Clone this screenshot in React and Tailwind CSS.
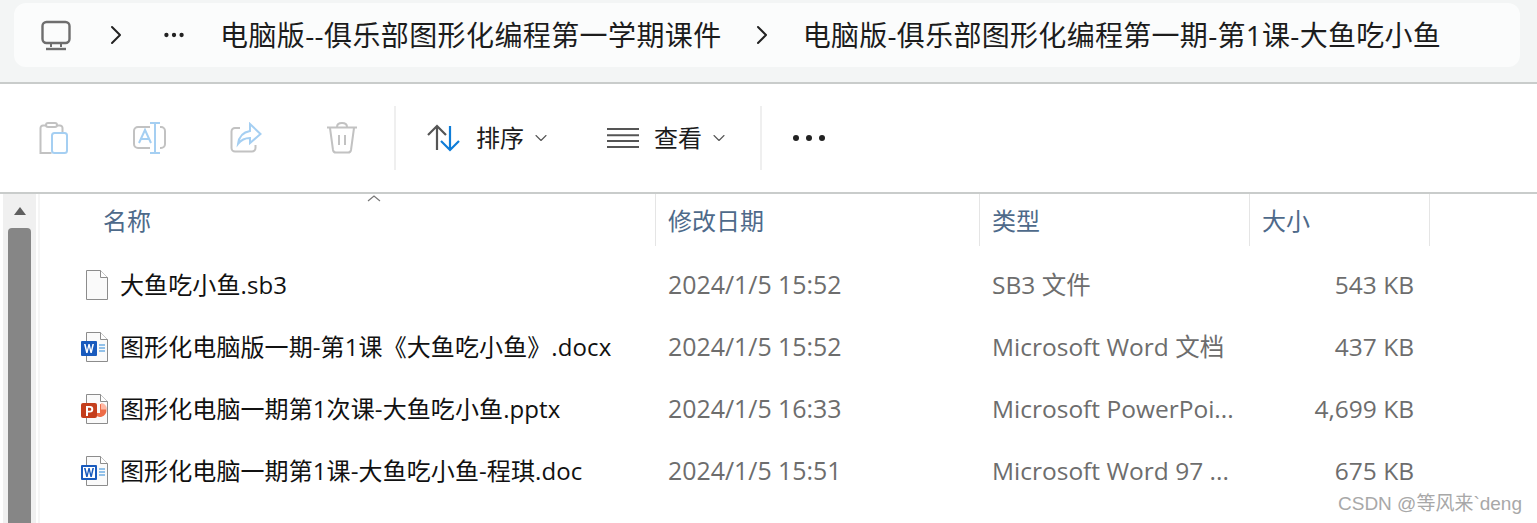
import { ChevronRight, ChevronDown, Ellipsis } from 'lucide-react';

const FONT = "font-['Open_Sans','Noto_Sans_CJK_SC',sans-serif]";

const rows = [
  { name: '大鱼吃小鱼.sb3', date: '2024/1/5 15:52', type: 'SB3 文件', size: '543 KB', icon: 'blank' },
  { name: '图形化电脑版一期-第1课《大鱼吃小鱼》.docx', date: '2024/1/5 15:52', type: 'Microsoft Word 文档', size: '437 KB', icon: 'docx' },
  { name: '图形化电脑一期第1次课-大鱼吃小鱼.pptx', date: '2024/1/5 16:33', type: 'Microsoft PowerPoi...', size: '4,699 KB', icon: 'pptx' },
  { name: '图形化电脑一期第1课-大鱼吃小鱼-程琪.doc', date: '2024/1/5 15:51', type: 'Microsoft Word 97 ...', size: '675 KB', icon: 'doc' },
];

function FileIcon({ kind }) {
  return (
    <svg width="28" height="30" viewBox="0 0 28 30" className="shrink-0">
      <path d="M5.5.5h14l7 7v22h-21z" fill="#fafafa" stroke="#8c8c8c" />
      <path d="M19.5.5v7h7" fill="#fff" stroke="#8c8c8c" />
      {kind === 'docx' || kind === 'doc' ? (
        <>
          <path d="M18 13h6M18 16h6M18 19h6" stroke="#2b88d8" strokeWidth="1.2" />
          <rect x="0" y="9" width="16" height="15" rx="1" fill="#185abd" />
          {kind === 'doc' && <rect x="2" y="11" width="12" height="11" fill="#fff" />}
          <path
            d="M3 12l2.2 9h1.4L8 15l1.4 6h1.4l2.2-9h-1.6l-1.3 6-1.4-6H7.4L6 18l-1.4-6z"
            fill={kind === 'doc' ? '#185abd' : '#fff'}
          />
        </>
      ) : null}
      {kind === 'pptx' && (
        <>
          <path d="M19 10a6.5 6.5 0 1 1-6 9h6z" fill="#ed6c47" />
          <path d="M20 9a6.5 6.5 0 0 1 6 6.500h-6z" fill="#ffb9a5" />
          <rect x="0" y="9" width="16" height="15" rx="2" fill="#c43e1c" />
          <path fillRule="evenodd" d="M5 12h4a3.200 3.200 0 0 1 0 6.500H7V22H5zm2 1.800v3h1.800a1.500 1.500 0 0 0 0-3z" fill="#fff" />
        </>
      )}
    </svg>
  );
}

function Divider() {
  return <div className="w-0.5 h-16 bg-[#efefef] mx-0" />;
}

export default function App() {
  return (
    <div className={`w-[1537px] h-[523px] overflow-hidden bg-white relative ${FONT}`}>
      {/* address bar */}
      <div className="h-[84px] bg-[#f3f5f5] border-b-2 border-[#c9cccb] pt-[3px] pl-3.5 pr-[17px]">
        <div className="h-16 bg-[#fbfcfc] rounded-xl flex items-center text-[28px] tracking-[0.4px] text-[#1c1c1c] whitespace-nowrap">
          <svg width="32" height="32" viewBox="0 0 32 32" className="ml-[26px]" fill="none" stroke="#6e6e6e" strokeWidth="2.400">
            <rect x="2.500" y="3" width="27" height="21" rx="4" />
            <path d="M11 24v4M21 24v4" strokeWidth="2" />
            <path d="M6 30h20" strokeWidth="2.400" />
          </svg>
          <ChevronRight size={32} strokeWidth={1.500} className="ml-[28px] text-[#222]" />
          <Ellipsis size={26} strokeWidth={2} className="ml-[29px] text-[#222]" />
          <span className="ml-[33px]">电脑版--俱乐部图形化编程第一学期课件</span>
          <ChevronRight size={32} strokeWidth={1.500} className="ml-[24px] text-[#222]" />
          <span className="ml-[25px] tracking-[0.3px]">电脑版-俱乐部图形化编程第一期-第1课-大鱼吃小鱼</span>
        </div>
      </div>

      {/* toolbar */}
      <div className="h-[110px] border-b-2 border-[#c9cccb] flex items-center text-[#1c1c1c] text-2xl">
        <svg width="30" height="34" viewBox="0 0 30 34" fill="none" className="ml-[39px]" strokeWidth="2">
          <path d="M7 4.500H4A2.500 2.500 0 0 0 1.500 7v25h11" stroke="#c2c2c2" />
          <path d="M18 4.500h3A2.500 2.500 0 0 1 23.500 7v4" stroke="#c2c2c2" />
          <rect x="7" y="2" width="11" height="4" rx="2" stroke="#c2c2c2" />
          <rect x="13" y="12" width="15" height="20" rx="2.500" stroke="#a5cff2" />
        </svg>
        <svg width="34" height="34" viewBox="0 0 34 34" fill="none" className="ml-[63px]" strokeWidth="2">
          <path d="M18 6H6a4 4 0 0 0-4 4v13a4 4 0 0 0 4 4h12M28 6h1a4 4 0 0 1 4 4v13a4 4 0 0 1-4 4h-1" stroke="#c2c2c2" />
          <path d="M18 2h10M23 2v30M18 32h10" stroke="#a5cff2" />
          <path d="M7 22l6-13 6 13M9 18h8" stroke="#a5cff2" />
        </svg>
        <svg width="32" height="32" viewBox="0 0 32 32" fill="none" className="ml-[64px]" strokeWidth="2">
          <path d="M10 6H5a3.500 3.500 0 0 0-3.500 3.500V26A3.500 3.500 0 0 0 5 29.500h17a3.500 3.500 0 0 0 3.500-3.500v-3" stroke="#c2c2c2" />
          <path d="M20 2l10.500 10L20 21v-5c-6 0-9 2-12 6 1-8 6-12 12-13z" stroke="#a5cff2" />
        </svg>
        <svg width="32" height="32" viewBox="0 0 32 32" fill="none" stroke="#c2c2c2" strokeWidth="2" className="ml-[64px]">
          <path d="M1 5.500h30M11 5c0-2.500 2-4 5-4s5 1.500 5 4M4 6l3 22a3 3 0 0 0 3 2.500h12a3 3 0 0 0 3-2.500l3-22M13 13v10M19 13v10" />
        </svg>
        <div className="ml-[36px]"><Divider /></div>

        <svg width="34" height="28" viewBox="0 0 34 28" fill="none" strokeWidth="2.200" className="ml-[31px]">
          <path d="M10 26V2M1 11l9-9 9 9" stroke="#555" />
          <path d="M23 2v24M14 17l9 9 9-9" stroke="#0f7dd8" />
        </svg>
        <span className="ml-[15px]">排序</span>
        <ChevronDown size={20} strokeWidth={1.300} className="ml-[7px] text-[#555]" />

        <svg width="32" height="20" viewBox="0 0 32 20" fill="none" stroke="#555" strokeWidth="2" className="ml-[56px]">
          <path d="M0 1h32M0 7.300h32M0 13h32M0 19h32" />
        </svg>
        <span className="ml-[15px]">查看</span>
        <ChevronDown size={20} strokeWidth={1.300} className="ml-[7px] text-[#555]" />
        <div className="ml-[31px]"><Divider /></div>
        <div className="ml-[31px] flex gap-[7px]">
          <span className="w-[6px] h-[6px] rounded-full bg-[#222]" />
          <span className="w-[6px] h-[6px] rounded-full bg-[#222]" />
          <span className="w-[6px] h-[6px] rounded-full bg-[#222]" />
        </div>
      </div>

      {/* list */}
      <div className="flex h-[329px]">
        <div className="w-[33px] ml-[3px] bg-[#f0f0f0] flex flex-col items-center shrink-0">
          <div className="mt-[13px] w-0 h-0 border-x-[6px] border-x-transparent border-b-[8px] border-b-[#5f5f5f]" />
          <div className="mt-[13px] w-[23px] flex-1 bg-[#868686] rounded-t-sm" />
        </div>
        <div className="flex-1 border-l-2 border-[#f5f5f5] ml-0.5">
          <div className="grid grid-cols-[616px_324px_270px_180px] h-[52px] text-2xl text-[#4e6a8a] leading-none">
            <div className="pl-[63px] pt-[15px] border-r border-[#e5e5e5]">名称</div>
            <div className="pl-3 pt-[15px] border-r border-[#e5e5e5]">修改日期</div>
            <div className="pl-3 pt-[15px] border-r border-[#e5e5e5]">类型</div>
            <div className="pl-3 pt-[15px] border-r border-[#e5e5e5]">大小</div>
          </div>
          <div className="pt-[8px]">
            {rows.map((row) => (
              <div key={row.name} className="grid grid-cols-[616px_324px_270px_180px] h-[62px] items-center text-[24.5px] text-[#6d6d6d] whitespace-nowrap">
                <div className="flex items-center pl-[41px] gap-[11px]">
                  <FileIcon kind={row.icon} />
                  <span className="text-[#111] text-2xl tracking-[0.1px]">{row.name}</span>
                </div>
                <div className="pl-3 text-[24.9px]">{row.date}</div>
                <div className="pl-3 overflow-hidden">{row.type}</div>
                <div className="text-right pr-[16px]">{row.size}</div>
              </div>
            ))}
          </div>
        </div>
      </div>

      {/* sort caret, sits over the header */}
      <svg width="16" height="8" viewBox="0 0 16 8" fill="none" stroke="#777" strokeWidth="1.200" className="absolute left-[366px] top-[194px]">
        <path d="M2 7l6-5 6 5" />
      </svg>
      {/* watermark */}
      <div className="absolute right-[15px] bottom-[10px] font-['Liberation_Sans','Noto_Sans_CJK_SC',sans-serif] text-[19px] leading-none text-[#a8a8a8]">CSDN @等风来`deng</div>
    </div>
  );
}
